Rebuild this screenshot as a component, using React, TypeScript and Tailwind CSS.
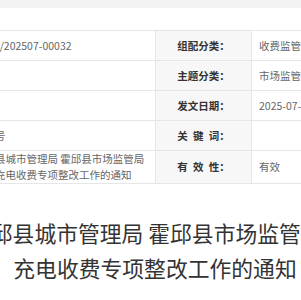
import React from "react";

const title =
  "霍邱县城市管理局 霍邱县市场监管局关于充电收费专项整改工作的通知";

const rows = [
  { leftLabel: "索 引 号：", left: "AH20/202507-00032", label: "组配分类：", value: "收费监管" },
  { leftLabel: "发布机构：", left: "", label: "主题分类：", value: "市场监管、安全生产监管" },
  { leftLabel: "生成日期：", left: "", label: "发文日期：", value: "2025-07-15" },
  { leftLabel: "文　　号：", left: "无文号", label: "关 键 词：", value: "" },
  { leftLabel: "标　　题：", left: title, label: "有 效 性：", value: "有效" },
];

function InfoTable() {
  const labelStyle =
    "flex items-center justify-center bg-[#f7f7f7] border-r border-b border-[#e6e6e6] font-bold text-[#333] whitespace-nowrap";
  const valueStyle =
    "flex items-center px-[7px] border-r border-b border-[#e6e6e6] text-[#666] leading-[16px]";

  return (
    <div className="grid grid-cols-[96px_189px_96px_189px] border-t border-l border-[#e6e6e6] text-[10.5px]">
      {rows.map((row, i) => (
        <React.Fragment key={i}>
          <div className={`${labelStyle} min-h-[30px]`}>{row.leftLabel}</div>
          <div className={`${valueStyle} min-h-[30px]`}>{row.left}</div>
          <div className={`${labelStyle} min-h-[30px]`}>{row.label.replace(/ /g, "\u2002")}</div>
          <div className={`${valueStyle} min-h-[30px] whitespace-nowrap overflow-hidden`}>{row.value}</div>
        </React.Fragment>
      ))}
    </div>
  );
}

export default function App() {
  return (
    <div className="w-[301px] h-[300px] overflow-hidden bg-[#f3f3f3] pt-[8px] font-['Noto_Sans_CJK_SC',sans-serif]">
      <div className="ml-[-150px] w-[620px] bg-white pt-[22px] pl-[20px] pb-[40px]">
        <InfoTable />
        <h1 className="ml-[99px] w-[372px] mt-[31px] text-center text-[21.8px] leading-[35px] text-[#333] font-normal">
          <span className="whitespace-nowrap">霍邱县城市管理局 霍邱县市场监管局关于</span>
          <br />
          充电收费专项整改工作的通知
        </h1>
      </div>
    </div>
  );
}
